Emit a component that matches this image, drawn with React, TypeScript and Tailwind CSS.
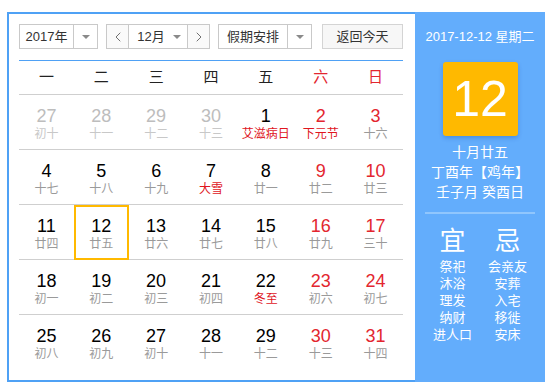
import { ChevronLeft, ChevronRight } from 'lucide-react'

type Day = { d: number; l: string; other?: boolean; fest?: boolean }

const weeks: Day[][] = [
  [
    { d: 27, l: '初十', other: true },
    { d: 28, l: '十一', other: true },
    { d: 29, l: '十二', other: true },
    { d: 30, l: '十三', other: true },
    { d: 1, l: '艾滋病日', fest: true },
    { d: 2, l: '下元节', fest: true },
    { d: 3, l: '十六' },
  ],
  [
    { d: 4, l: '十七' },
    { d: 5, l: '十八' },
    { d: 6, l: '十九' },
    { d: 7, l: '大雪', fest: true },
    { d: 8, l: '廿一' },
    { d: 9, l: '廿二' },
    { d: 10, l: '廿三' },
  ],
  [
    { d: 11, l: '廿四' },
    { d: 12, l: '廿五' },
    { d: 13, l: '廿六' },
    { d: 14, l: '廿七' },
    { d: 15, l: '廿八' },
    { d: 16, l: '廿九' },
    { d: 17, l: '三十' },
  ],
  [
    { d: 18, l: '初一' },
    { d: 19, l: '初二' },
    { d: 20, l: '初三' },
    { d: 21, l: '初四' },
    { d: 22, l: '冬至', fest: true },
    { d: 23, l: '初六' },
    { d: 24, l: '初七' },
  ],
  [
    { d: 25, l: '初八' },
    { d: 26, l: '初九' },
    { d: 27, l: '初十' },
    { d: 28, l: '十一' },
    { d: 29, l: '十二' },
    { d: 30, l: '十三' },
    { d: 31, l: '十四' },
  ],
]

const weekdays = ['一', '二', '三', '四', '五', '六', '日']
const yi = ['祭祀', '沐浴', '理发', '纳财', '进人口']
const ji = ['会亲友', '安葬', '入宅', '移徙', '安床']

function Caret() {
  return (
    <span className="w-0 h-0 border-l-[4px] border-r-[4px] border-t-[4px] border-l-transparent border-r-transparent border-t-[#8a8a8a]" />
  )
}

export default function App() {
  return (
    <div
      className="w-[557px] h-[390px] bg-white pt-[12px] pl-[7px] text-[#222]"
      style={{ fontFamily: '"Liberation Sans", "Noto Sans CJK SC", sans-serif' }}
    >
      <div className="flex w-[538px] h-[370px]">
        {/* 左侧日历 */}
        <div className="w-[408px] h-full border-2 border-r-0 border-[#4fa1f5] pt-[10px] pl-[10px] pr-[12px]">
          {/* 控件 */}
          <div className="flex items-center h-[25px] text-[13px] text-[#333]">
            <div className="flex w-[79px] h-[25px] border border-[#c9c9c9]">
              <div className="flex-1 flex items-center justify-center">2017年</div>
              <div className="w-[24px] flex items-center justify-center border-l border-[#c9c9c9]">
                <Caret />
              </div>
            </div>
            <div className="flex ml-[8px] w-[104px] h-[25px] border border-[#c9c9c9]">
              <div className="w-[22px] flex items-center justify-center border-r border-[#c9c9c9] bg-[#fafafa]">
                <ChevronLeft size={16} strokeWidth={1.4} color="#666" />
              </div>
              <div className="flex-1 flex items-center justify-center gap-[8px] pl-[2px]">
                <span>12月</span>
                <Caret />
              </div>
              <div className="w-[22px] flex items-center justify-center border-l border-[#c9c9c9] bg-[#fafafa]">
                <ChevronRight size={16} strokeWidth={1.4} color="#666" />
              </div>
            </div>
            <div className="flex ml-[8px] w-[94px] h-[25px] border border-[#c9c9c9]">
              <div className="flex-1 flex items-center justify-center">假期安排</div>
              <div className="w-[24px] flex items-center justify-center border-l border-[#c9c9c9]">
                <Caret />
              </div>
            </div>
            <div className="ml-[10px] w-[81px] h-[25px] flex items-center justify-center border border-[#d4d4d4] bg-[#f7f7f7]">
              返回今天
            </div>
          </div>

          {/* 星期 */}
          <div className="mt-[11px] border-t border-[#4fa1f5]">
            <div className="grid grid-cols-7 h-[34px] border-b border-[#cfcfcf] items-center text-[15px]">
              {weekdays.map((w, i) => (
                <div key={w} className={i >= 5 ? 'text-center text-[#e3262f]' : 'text-center text-[#222]'}>
                  {w}
                </div>
              ))}
            </div>

            {/* 日期 */}
            {weeks.map((week, wi) => (
              <div
                key={wi}
                className={
                  wi < weeks.length - 1
                    ? 'grid grid-cols-7 h-[55px] border-b border-[#cfcfcf]'
                    : 'grid grid-cols-7 h-[55px]'
                }
              >
                {week.map((day, di) => {
                  const weekend = di >= 5
                  const selected = !day.other && day.d === 12
                  const numColor = day.other ? 'text-[#bdbdbd]' : weekend ? 'text-[#e3262f]' : 'text-black'
                  const lunarColor = day.other
                    ? 'text-[#c8c8c8]'
                    : day.fest
                      ? 'text-[#e0161e]'
                      : 'text-[#9a9a9a]'
                  return (
                    <div key={di} className="relative flex flex-col items-center pt-[11px]">
                      {selected && (
                        <div className="absolute left-0 right-0 top-0 bottom-[-1px] border-2 border-[#ffb900]" />
                      )}
                      <div className={`text-[18px] leading-[20px] ${numColor}`}>{day.d}</div>
                      <div className={`text-[12px] leading-[16px] whitespace-nowrap ${lunarColor}`}>{day.l}</div>
                    </div>
                  )
                })}
              </div>
            ))}
          </div>
        </div>

        {/* 右侧详情 */}
        <div className="w-[130px] h-full bg-[#63adfc] text-white flex flex-col items-center">
          <div className="mt-[16px] text-[13px] leading-[18px] whitespace-nowrap">2017-12-12 星期二</div>
          <div className="mt-[16px] w-[75px] h-[74px] rounded-[3px] bg-[#ffb900] shadow-[0_2px_4px_rgba(0,60,140,0.25)] flex items-center justify-center text-[50px] leading-none">
            12
          </div>
          <div className="mt-[6px] text-[14px] leading-[20px] text-center">
            <div>十月廿五</div>
            <div>丁酉年【鸡年】</div>
            <div>壬子月 癸酉日</div>
          </div>
          <div className="mt-[10px] w-[110px] h-[2px] bg-[#90c6fd]" />
          <div className="grid grid-cols-2 w-full px-[10px] mt-[13px]">
            <div className="flex flex-col items-center">
              <div className="text-[26px] leading-[28px]">宜</div>
              <div className="mt-[3px] text-[13px] leading-[17px] text-center">
                {yi.map((t) => (
                  <div key={t}>{t}</div>
                ))}
              </div>
            </div>
            <div className="flex flex-col items-center">
              <div className="text-[26px] leading-[28px]">忌</div>
              <div className="mt-[3px] text-[13px] leading-[17px] text-center">
                {ji.map((t) => (
                  <div key={t}>{t}</div>
                ))}
              </div>
            </div>
          </div>
        </div>
      </div>
    </div>
  )
}
